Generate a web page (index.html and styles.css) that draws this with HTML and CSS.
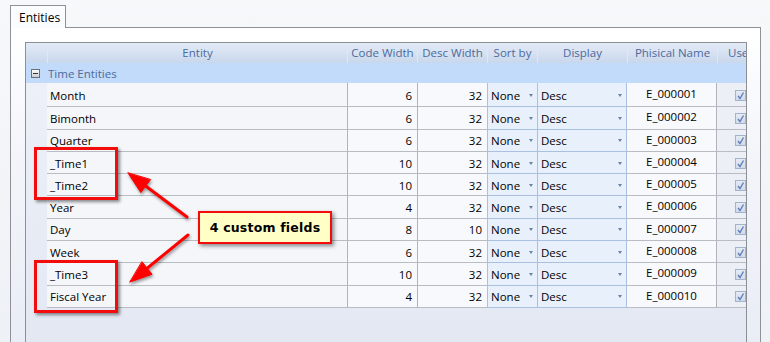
FILE: index.html
```html
<!DOCTYPE html>
<html>
<head>
<meta charset="utf-8">
<link rel="stylesheet" href="styles.css">
</head>
<body>
<div class="tabs"><div class="tab">Entities</div></div>
<div class="panel">
  <div class="grid">
    <div class="row head">
      <div class="c indent"></div>
      <div class="c">Entity</div>
      <div class="c">Code Width</div>
      <div class="c">Desc Width</div>
      <div class="c">Sort by</div>
      <div class="c">Display</div>
      <div class="c">Phisical Name</div>
      <div class="c usehead">Use</div>
    </div>
    <div class="group"><span class="minus"></span>Time Entities</div>

    <div class="row data first">
      <div class="c indent"></div><div class="c ent">Month</div><div class="c num">6</div><div class="c num">32</div>
      <div class="c dd sort">None<span class="arr"></span></div><div class="c dd disp">Desc<span class="arr"></span></div>
      <div class="c pn">E_000001</div><div class="c use"><span class="chk"><svg viewBox="0 0 9 9" width="9" height="9"><path d="M2 5 L4 7.5 L7.5 1.5" fill="none" stroke="#5b7fbf" stroke-width="1.4"/></svg></span></div>
    </div>
    <div class="row data">
      <div class="c indent"></div><div class="c ent">Bimonth</div><div class="c num">6</div><div class="c num">32</div>
      <div class="c dd sort">None<span class="arr"></span></div><div class="c dd disp">Desc<span class="arr"></span></div>
      <div class="c pn">E_000002</div><div class="c use"><span class="chk"><svg viewBox="0 0 9 9" width="9" height="9"><path d="M2 5 L4 7.5 L7.5 1.5" fill="none" stroke="#5b7fbf" stroke-width="1.4"/></svg></span></div>
    </div>
    <div class="row data">
      <div class="c indent"></div><div class="c ent">Quarter</div><div class="c num">6</div><div class="c num">32</div>
      <div class="c dd sort">None<span class="arr"></span></div><div class="c dd disp">Desc<span class="arr"></span></div>
      <div class="c pn">E_000003</div><div class="c use"><span class="chk"><svg viewBox="0 0 9 9" width="9" height="9"><path d="M2 5 L4 7.5 L7.5 1.5" fill="none" stroke="#5b7fbf" stroke-width="1.4"/></svg></span></div>
    </div>
    <div class="row data">
      <div class="c indent"></div><div class="c ent">_Time1</div><div class="c num">10</div><div class="c num">32</div>
      <div class="c dd sort">None<span class="arr"></span></div><div class="c dd disp">Desc<span class="arr"></span></div>
      <div class="c pn">E_000004</div><div class="c use"><span class="chk"><svg viewBox="0 0 9 9" width="9" height="9"><path d="M2 5 L4 7.5 L7.5 1.5" fill="none" stroke="#5b7fbf" stroke-width="1.4"/></svg></span></div>
    </div>
    <div class="row data">
      <div class="c indent"></div><div class="c ent">_Time2</div><div class="c num">10</div><div class="c num">32</div>
      <div class="c dd sort">None<span class="arr"></span></div><div class="c dd disp">Desc<span class="arr"></span></div>
      <div class="c pn">E_000005</div><div class="c use"><span class="chk"><svg viewBox="0 0 9 9" width="9" height="9"><path d="M2 5 L4 7.5 L7.5 1.5" fill="none" stroke="#5b7fbf" stroke-width="1.4"/></svg></span></div>
    </div>
    <div class="row data">
      <div class="c indent"></div><div class="c ent">Year</div><div class="c num">4</div><div class="c num">32</div>
      <div class="c dd sort">None<span class="arr"></span></div><div class="c dd disp">Desc<span class="arr"></span></div>
      <div class="c pn">E_000006</div><div class="c use"><span class="chk"><svg viewBox="0 0 9 9" width="9" height="9"><path d="M2 5 L4 7.5 L7.5 1.5" fill="none" stroke="#5b7fbf" stroke-width="1.4"/></svg></span></div>
    </div>
    <div class="row data">
      <div class="c indent"></div><div class="c ent">Day</div><div class="c num">8</div><div class="c num">10</div>
      <div class="c dd sort">None<span class="arr"></span></div><div class="c dd disp">Desc<span class="arr"></span></div>
      <div class="c pn">E_000007</div><div class="c use"><span class="chk"><svg viewBox="0 0 9 9" width="9" height="9"><path d="M2 5 L4 7.5 L7.5 1.5" fill="none" stroke="#5b7fbf" stroke-width="1.4"/></svg></span></div>
    </div>
    <div class="row data">
      <div class="c indent"></div><div class="c ent">Week</div><div class="c num">6</div><div class="c num">32</div>
      <div class="c dd sort">None<span class="arr"></span></div><div class="c dd disp">Desc<span class="arr"></span></div>
      <div class="c pn">E_000008</div><div class="c use"><span class="chk"><svg viewBox="0 0 9 9" width="9" height="9"><path d="M2 5 L4 7.5 L7.5 1.5" fill="none" stroke="#5b7fbf" stroke-width="1.4"/></svg></span></div>
    </div>
    <div class="row data">
      <div class="c indent"></div><div class="c ent">_Time3</div><div class="c num">10</div><div class="c num">32</div>
      <div class="c dd sort">None<span class="arr"></span></div><div class="c dd disp">Desc<span class="arr"></span></div>
      <div class="c pn">E_000009</div><div class="c use"><span class="chk"><svg viewBox="0 0 9 9" width="9" height="9"><path d="M2 5 L4 7.5 L7.5 1.5" fill="none" stroke="#5b7fbf" stroke-width="1.4"/></svg></span></div>
    </div>
    <div class="row data">
      <div class="c indent"></div><div class="c ent">Fiscal Year</div><div class="c num">4</div><div class="c num">32</div>
      <div class="c dd sort">None<span class="arr"></span></div><div class="c dd disp">Desc<span class="arr"></span></div>
      <div class="c pn">E_000010</div><div class="c use"><span class="chk"><svg viewBox="0 0 9 9" width="9" height="9"><path d="M2 5 L4 7.5 L7.5 1.5" fill="none" stroke="#5b7fbf" stroke-width="1.4"/></svg></span></div>
    </div>
  </div>
</div>

<div class="mark mark1"></div>
<div class="mark mark2"></div>
<svg class="arrows" width="770" height="342" viewBox="0 0 770 342">
  <g fill="#ff0000" stroke="#ff0000" stroke-width="3" stroke-linecap="round">
    <line x1="143" y1="184" x2="187" y2="217"/>
    <polygon stroke-width="1" points="128,173 140.8,192.6 150.4,179.8"/>
    <line x1="145" y1="270" x2="188" y2="235"/>
    <polygon stroke-width="1" points="130,282 152.1,274.3 142.1,261.9"/>
  </g>
</svg>
<div class="callout">4 custom fields</div>
</body>
</html>
```

FILE: styles.css
```css
html, body {
  margin: 0;
  padding: 0;
}
body {
  width: 770px;
  height: 342px;
  overflow: hidden;
  position: relative;
  background: linear-gradient(#f7f8fa, #eef1f6);
  font-family: "Open Sans", "Noto Sans", sans-serif;
  font-size: 11.5px;
  color: #000;
}
.tabs {
  display: flex;
  padding: 5px 0 0 10px;
  height: 22px;
}
.tab {
  position: relative;
  z-index: 2;
  width: 56px;
  height: 23px;
  box-sizing: border-box;
  border: 1px solid #8f9196;
  border-bottom: none;
  background: #fbfcfd;
  padding: 3px 0 0 8px;
  font-size: 12px;
}
.panel {
  margin: 0 9px 0 10px;
  height: 315px;
  box-sizing: border-box;
  border: 1px solid #8f9196;
  border-bottom: none;
  background: linear-gradient(#ffffff, #f3f5fa 40%, #e9edf6);
  padding: 14px 13px 0 14px;
}
.grid {
  height: 301px;
  box-sizing: border-box;
  border: 1px solid #8c8f94;
  border-bottom: none;
  background: linear-gradient(#eef1f8, #e3e8f3);
  overflow: hidden;
}
.row {
  display: grid;
  grid-template-columns: 21px 300px 70px 70px 50px 90px 90px 50px;
  width: 741px;
}
.head {
  height: 20px;
  background: linear-gradient(#e3eaf6, #d6e1f1 50%, #c9d7ec);
  color: #4d6a9c;
}
.head .c {
  display: flex;
  align-items: center;
  justify-content: center;
  border-left: 1px solid #ece6d6;
  white-space: nowrap;
  padding-bottom: 1px;
}
.head .c.indent {
  border-left: none;
}
.head .c.usehead {
  justify-content: flex-start;
  padding-left: 10px;
}
.group {
  height: 20px;
  display: flex;
  align-items: center;
  background: #c2dbfa;
  color: #4d6a9c;
  padding-left: 5px;
}
.minus {
  width: 7px;
  height: 7px;
  border: 1px solid #6c6f75;
  background: linear-gradient(#fdfdfd, #c9cdd3);
  margin-right: 8px;
  position: relative;
}
.minus::after {
  content: "";
  position: absolute;
  left: 1px;
  top: 3px;
  width: 5px;
  height: 1px;
  background: #333;
}
.data {
  height: 22.3px;
}
.data.first {
  height: 24.3px;
}
.data .c {
  box-sizing: border-box;
  display: flex;
  align-items: center;
  border-bottom: 1px solid #b9bcc2;
  white-space: nowrap;
  overflow: hidden;
  padding-top: 1px;
}
.data.first .c {
  padding-top: 2px;
}
.data .c.indent {
  border-bottom: none;
}
.data .ent {
  padding-left: 3px;
  background: #f4f6fa;
}
.data .num {
  justify-content: flex-end;
  padding-right: 5px;
  background: #f8f9fc;
  border-left: 1px solid #b0b3b9;
}
.data .dd {
  background: #e8f0fb;
  border: 1px solid #a9c0e0;
  border-top: none;
  border-right: none;
  padding-left: 3px;
  position: relative;
}
.data .disp {
  border-right: 1px solid #a9c0e0;
}
.arr {
  position: absolute;
  top: 50%;
  margin-top: -1px;
  width: 0;
  height: 0;
  border-left: 2.5px solid transparent;
  border-right: 2.5px solid transparent;
  border-top: 3px solid #6c82a6;
}
.sort .arr {
  left: 41px;
}
.disp .arr {
  left: 80px;
}
.data .pn {
  justify-content: center;
  align-items: flex-start;
  padding-top: 2px;
  background: #f8f9fc;
  border-right: 1px solid #b0b3b9;
}
.data.first .pn {
  padding-top: 3px;
}
.data .use {
  justify-content: center;
  background: #eceff5;
}
.chk {
  width: 11px;
  height: 11px;
  box-sizing: border-box;
  border: 1px solid #a3b3cb;
  background: linear-gradient(#e6ebf3, #d3dbe8);
  display: flex;
  align-items: center;
  justify-content: center;
  margin-left: -4px;
}
.mark {
  position: absolute;
  left: 34px;
  width: 84px;
  height: 53px;
  box-sizing: border-box;
  border: 3px solid #f20c0c;
  box-shadow: 2px 2px 3px rgba(0, 0, 0, 0.45);
}
.mark1 {
  top: 147px;
}
.mark2 {
  top: 260px;
}
.arrows {
  position: absolute;
  left: 0;
  top: 0;
  filter: drop-shadow(1px 2px 1.5px rgba(0, 0, 0, 0.4));
}
.callout {
  position: absolute;
  left: 198px;
  top: 211px;
  width: 134px;
  height: 33px;
  box-sizing: border-box;
  border: 2px solid #f20c0c;
  background: #ffffc6;
  box-shadow: 2px 2px 4px rgba(0, 0, 0, 0.45);
  display: flex;
  align-items: center;
  justify-content: center;
  font-family: "DejaVu Sans", "Liberation Sans", sans-serif;
  font-weight: bold;
  font-size: 12.5px;
  letter-spacing: 0.2px;
  padding-bottom: 1px;
}
```
